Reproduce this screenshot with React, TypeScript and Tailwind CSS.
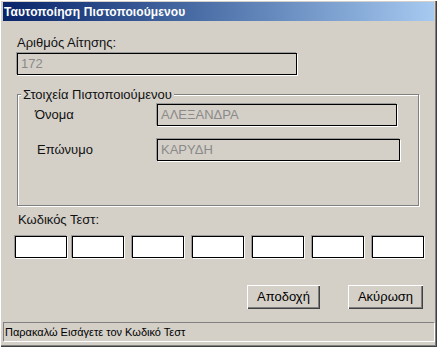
const font = { fontFamily: '"Liberation Sans", Arial, sans-serif' };

const Field = ({ value, className }: { value?: string; className: string }) => (
  <div
    className={`h-[22px] border border-black bg-[#d4d0c8] px-[3px] text-[13px] leading-[20px] text-[#8a8a8a] shadow-[-1px_-1px_0_#9a9a9a,1px_1px_0_#fff] ${className}`}
  >
    {value}
  </div>
);

const CodeBox = ({ className = "" }: { className?: string }) => (
  <div className={`h-[22px] w-[52px] border border-black bg-white shadow-[-1px_-1px_0_#9a9a9a,1px_1px_0_#fff] ${className}`} />
);

const WinButton = ({ label, className }: { label: string; className: string }) => (
  <button
    className={`h-[24px] bg-[#d4d0c8] text-[13px] text-black shadow-[inset_1px_1px_0_#fff,inset_-1px_-1px_0_#404040,inset_-2px_-2px_0_#808080] ${className}`}
  >
    {label}
  </button>
);

export default function App() {
  return (
    <div
      style={font}
      className="flex h-[347px] w-[437px] flex-col bg-[#d4d0c8] px-[3px] pt-[2px] shadow-[inset_1px_1px_0_#fff,inset_-1px_-1px_0_#404040,inset_-2px_-2px_0_#808080]"
    >
      {/* title bar */}
      <div className="flex h-[19px] items-center bg-gradient-to-r from-[#0a246a] to-[#a6caf0] pl-[1px] text-[12px] font-bold tracking-[0.1px] text-white">
        Ταυτοποίηση Πιστοποιούμενου
      </div>

      <div className="flex flex-col pl-[14px]">
        <div className="mt-[14px] text-[13px] leading-[16px] text-[#111]">Αριθμός Αίτησης:</div>
        <Field value="172" className="mt-[2px] w-[280px]" />

        {/* group box */}
        <div className="relative mt-[19px] h-[112px] w-[402px] border border-[#808080] shadow-[1px_1px_0_#fff,inset_1px_1px_0_#fff]">
          <div className="absolute left-[3px] top-[-8px] bg-[#d4d0c8] px-[2px] text-[13px] leading-[15px] text-[#111]">
            Στοιχεία Πιστοποιούμενου
          </div>
          <div className="mt-[9px] flex items-center">
            <div className="ml-[17px] w-[122px] text-[13px] text-[#111]">Όνομα</div>
            <Field value="ΑΛΕΞΑΝΔΡΑ" className="w-[240px]" />
          </div>
          <div className="mt-[13px] flex items-center">
            <div className="ml-[19px] w-[120px] text-[13px] text-[#111]">Επώνυμο</div>
            <Field value="ΚΑΡΥΔΗ" className="h-[21px] w-[243px]" />
          </div>
        </div>

        <div className="mt-[6px] pl-[1px] text-[13px] leading-[16px] text-[#111]">Κωδικός Τεστ:</div>
        <div className="ml-[-2px] mt-[8px] flex">
          <CodeBox />
          <CodeBox className="ml-[5px]" />
          <CodeBox className="ml-[8px]" />
          <CodeBox className="ml-[8px]" />
          <CodeBox className="ml-[8px]" />
          <CodeBox className="ml-[8px]" />
          <CodeBox className="ml-[8px]" />
        </div>

        <div className="mt-[27px] flex">
          <WinButton label="Αποδοχή" className="ml-[230px] w-[73px]" />
          <WinButton label="Ακύρωση" className="ml-[28px] w-[75px]" />
        </div>
      </div>

      {/* status bar */}
      <div className="mt-[13px] flex h-[19px] items-center border-l border-t border-[#808080] shadow-[1px_1px_0_#fff] pl-[1px] text-[11px] text-black">
        Παρακαλώ Εισάγετε τον Κωδικό Τεστ
      </div>
    </div>
  );
}
